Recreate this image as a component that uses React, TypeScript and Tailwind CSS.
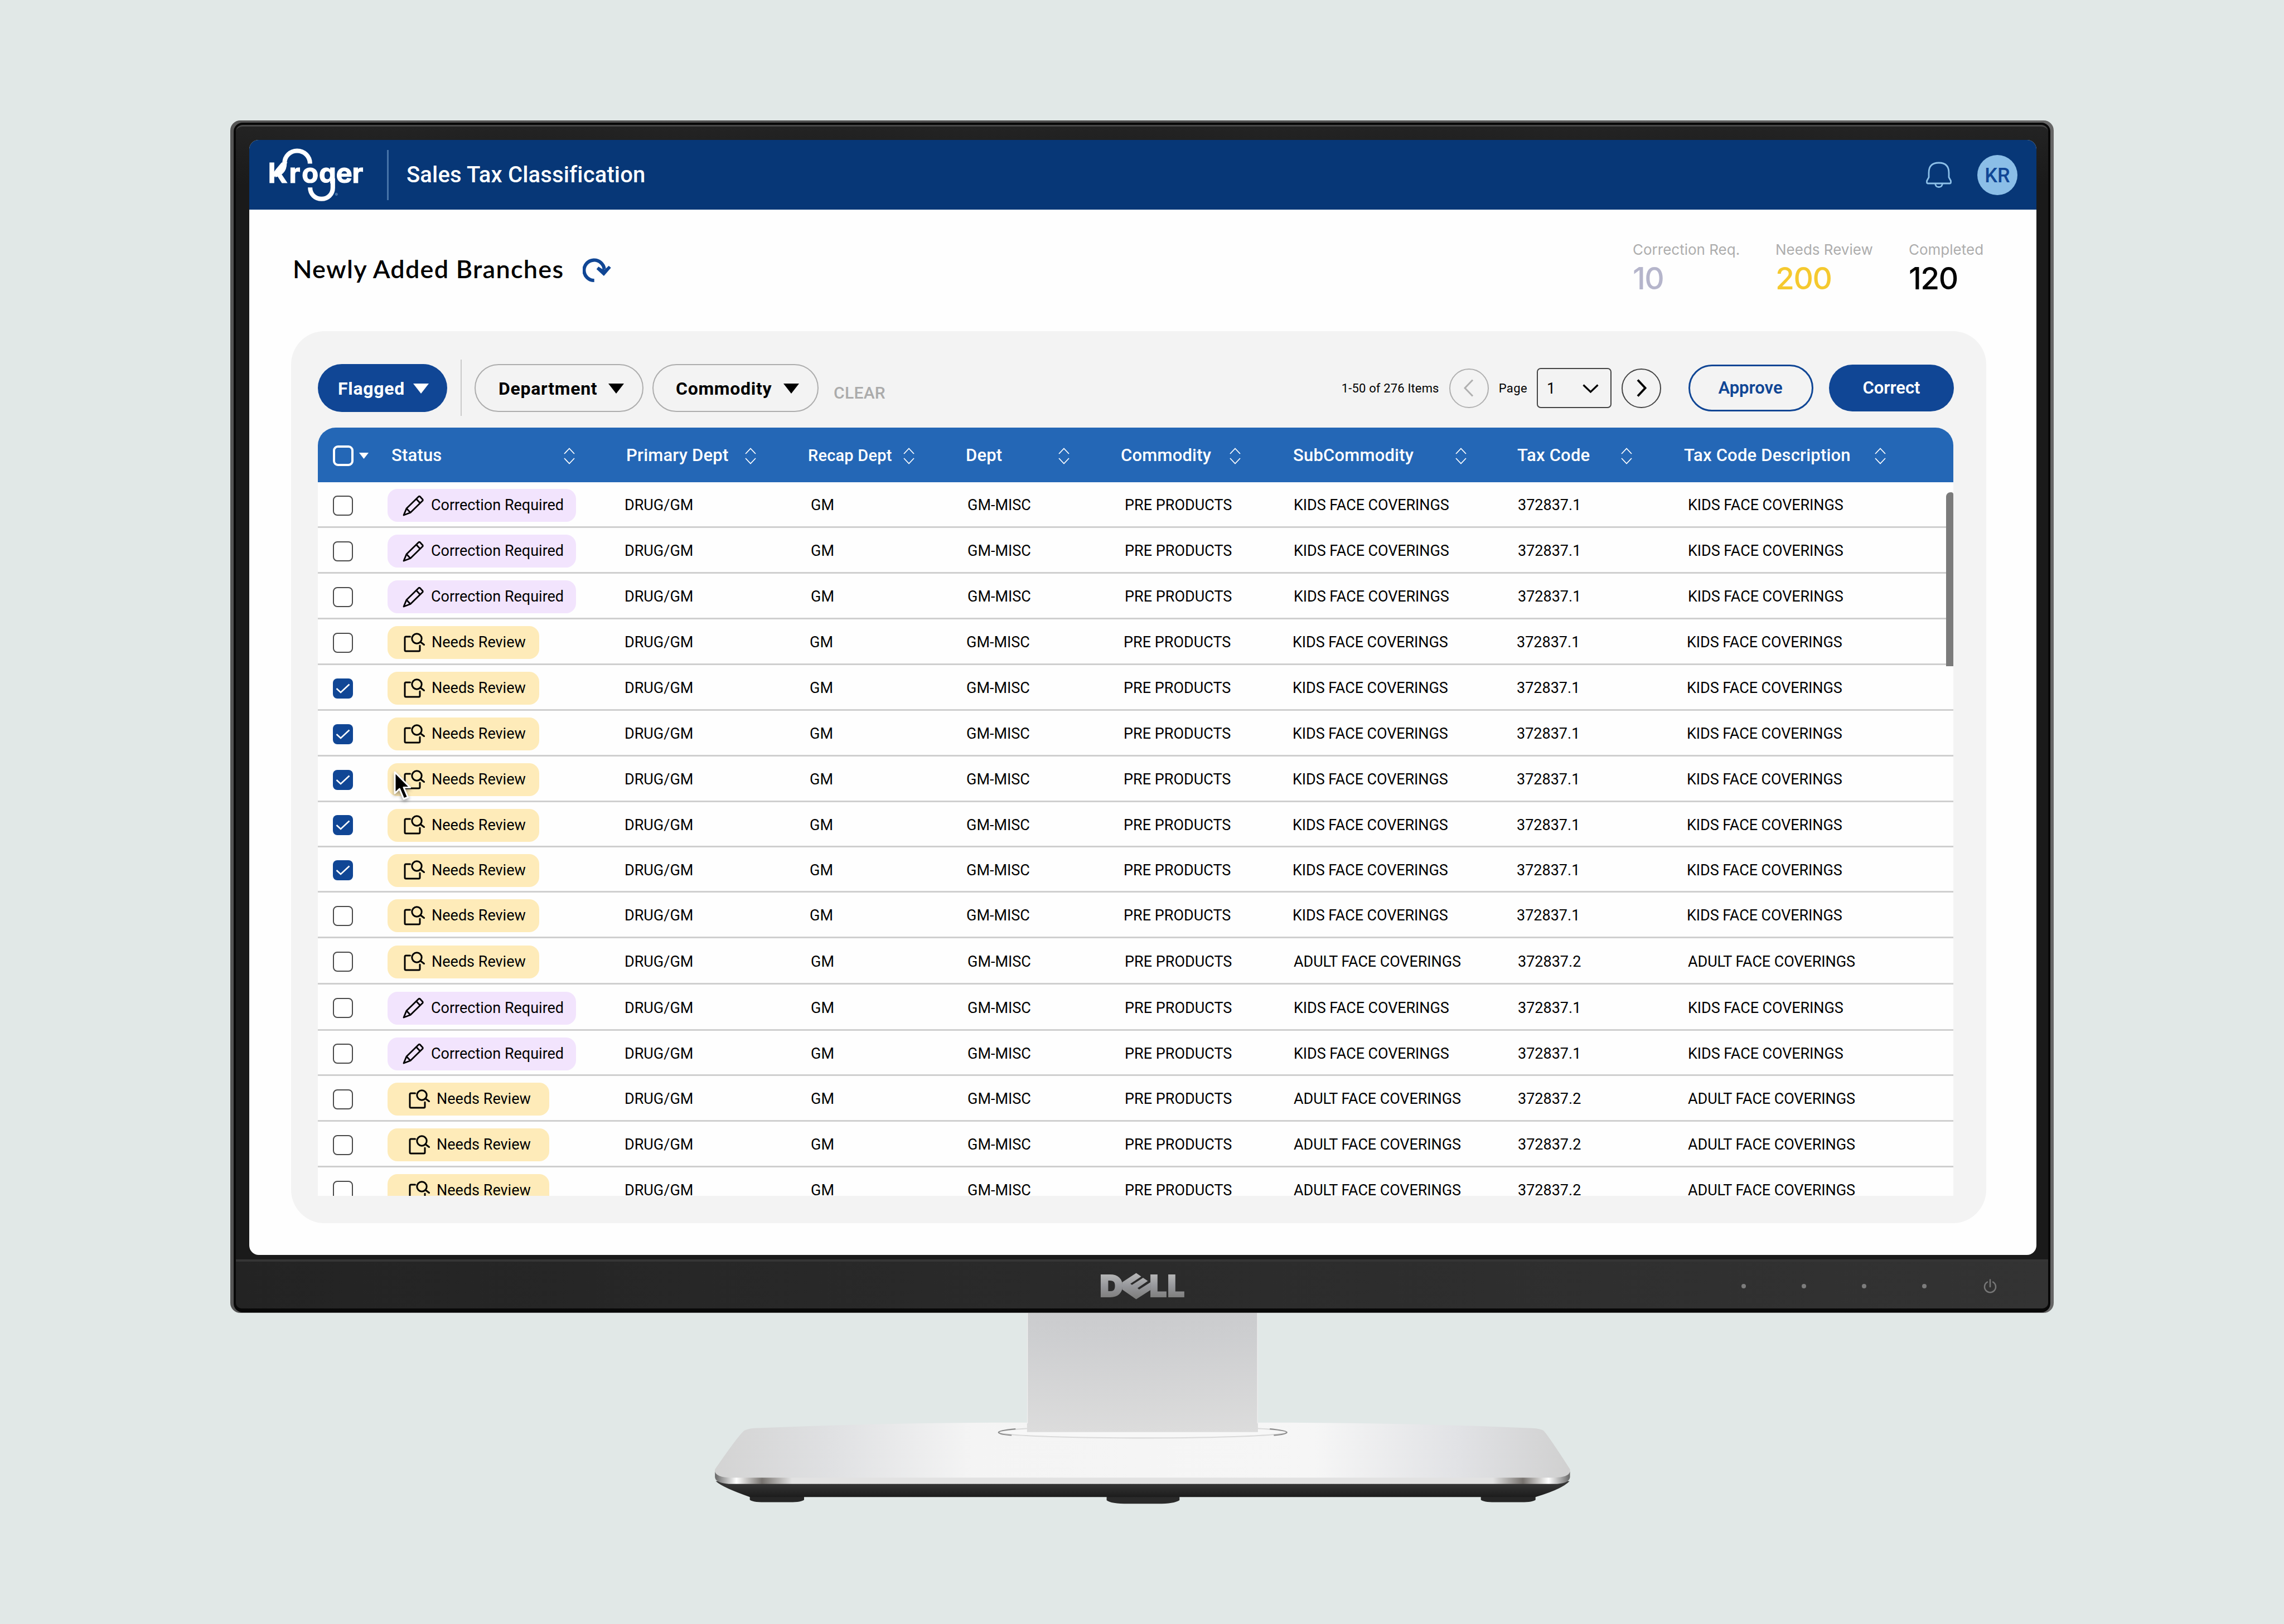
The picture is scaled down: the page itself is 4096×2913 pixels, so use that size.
import { clsx } from 'clsx';

type Status = 'correction' | 'review';

interface Row {
  status: Status;
  checked?: boolean;
  adult?: boolean;
  wide?: boolean;
  height?: string;
  nudged?: boolean;
}

const ROWS: Row[] = [
  { status: 'correction' },
  { status: 'correction' },
  { status: 'correction' },
  { status: 'review', nudged: true },
  { status: 'review', checked: true, nudged: true },
  { status: 'review', checked: true, nudged: true },
  { status: 'review', checked: true, nudged: true },
  { status: 'review', checked: true, nudged: true, height: 'h-[81px]' },
  { status: 'review', checked: true, nudged: true, height: 'h-[81px]' },
  { status: 'review', nudged: true },
  { status: 'review', adult: true, height: 'h-[83px]' },
  { status: 'correction', height: 'h-[83px]' },
  { status: 'correction', height: 'h-[81px]' },
  { status: 'review', adult: true, wide: true },
  { status: 'review', adult: true, wide: true },
  { status: 'review', adult: true, wide: true },
];

const COLUMNS = [
  { label: 'Status', className: 'pl-[8px] gap-[218px]' },
  { label: 'Primary Dept', className: 'pl-[3px] gap-[30px]' },
  { label: 'Recap Dept', className: '-ml-[5px] gap-[21px] text-[29px]' },
  { label: 'Dept', className: '-ml-[3px] gap-[101px]' },
  { label: 'Commodity', className: '-ml-[6px] gap-[33px]' },
  { label: 'SubCommodity', className: '-ml-[1px] gap-[75px]' },
  { label: 'Tax Code', className: '-ml-[1px] gap-[56px]' },
  { label: 'Tax Code Description', className: '-ml-[7px] gap-[43px]' },
];

const GRID =
  'grid grid-cols-[124px_426px_334px_281px_281px_304px_402px_305px_476px] items-center';

const KrogerLogo = () => (
  <svg className="h-[101px] w-[175px]" viewBox="45 60 740 426" fill="none">
    <defs>
      <clipPath id="baseline">
        <rect x="0" y="150" width="900" height="188" />
      </clipPath>
    </defs>
    <g
      clipPath="url(#baseline)"
      fill="#fff"
      stroke="#fff"
      strokeWidth="5"
      fontFamily="Inter"
      fontWeight="700"
      fontSize="206"
    >
      <text y="335">
        <tspan x="48">K</tspan>
        <tspan x="208">r</tspan>
        <tspan x="304">o</tspan>
        <tspan x="434">g</tspan>
        <tspan x="564">e</tspan>
        <tspan x="686">r</tspan>
      </text>
    </g>
    <path
      d="M100 276C150 262 173 232 173 186C173 132 216 91 268 91C323 91 366 134 366 188"
      stroke="#fff"
      strokeWidth="34"
    />
    <path d="M539 300V372C539 420 502 456 454 456C405 456 367 420 367 369" stroke="#fff" strokeWidth="34" />
    <text x="555" y="434" fill="#8db3dd" fontFamily="Inter" fontSize="34">
      ®
    </text>
  </svg>
);

const DellLogo = () => (
  <svg className="h-[50px] w-[153px]" viewBox="48 62 644 210">
    <defs>
      <linearGradient id="steel" x1="0" y1="70" x2="0" y2="262" gradientUnits="userSpaceOnUse">
        <stop offset="0" stopColor="#b9b9b9" />
        <stop offset="0.5" stopColor="#96979b" />
        <stop offset="1" stopColor="#7c7c7a" />
      </linearGradient>
    </defs>
    <g fill="url(#steel)" stroke="url(#steel)" strokeWidth="8" fontFamily="Inter" fontWeight="900" fontSize="226">
      <text y="246" x="49" textLength="176" lengthAdjust="spacingAndGlyphs">
        D
      </text>
      <text y="246" x="425" textLength="130" lengthAdjust="spacingAndGlyphs">
        L
      </text>
      <text y="246" x="559" textLength="130" lengthAdjust="spacingAndGlyphs">
        L
      </text>
    </g>
    {/* tilted square with the two slots of the E */}
    <path
      d="M218 138L324 68L362 94L280 149L292 158L376 104L412 128L334 182L346 192L432 138V196L324 266L218 192Z"
      fill="url(#steel)"
    />
  </svg>
);

const Caret = ({ className = 'h-[18px] w-[28px]' }: { className?: string }) => (
  <svg className={className} viewBox="0 0 28 18" fill="currentColor">
    <path d="M0 0H28L14 18Z" />
  </svg>
);

const SortIcon = () => (
  <svg className="h-[30px] w-[20px] shrink-0" viewBox="0 0 20 30" fill="none" stroke="#fff" strokeWidth="1.8">
    <path d="M1 11L10 1.5L19 11M1 19L10 28.5L19 19" />
  </svg>
);

const PencilIcon = () => (
  <svg
    className="size-[38px] shrink-0"
    viewBox="0 0 38 38"
    fill="none"
    stroke="#000"
    strokeWidth="2.8"
    strokeLinejoin="round"
  >
    <path d="M2 36L7 24L29 2.5Q30 2 31 2.5L36 8Q36.500 9 36 10L14 31.500Z" />
    <path d="M7 24L14 31.500M24.500 7L31.500 14.500" />
  </svg>
);

const ReviewIcon = () => (
  <svg
    className="h-[36px] w-[40px] shrink-0"
    viewBox="0 0 40 36"
    fill="none"
    stroke="#000"
    strokeWidth="3"
    strokeLinecap="round"
    strokeLinejoin="round"
  >
    <path d="M12.500 7H5Q3 7 3 9V31Q3 33 5 33H28Q30 33 30 31V23" />
    <circle cx="24.500" cy="10.500" r="8.700" />
    <path d="M31 16.500L37.500 21.500" />
  </svg>
);

const StatusBadge = ({ status, wide }: { status: Status; wide?: boolean }) => {
  if (status === 'correction') {
    return (
      <div className="ml-[1px] flex h-[59px] w-[338px] items-center gap-[13px] rounded-[18px] bg-[#f2e4fd] pl-[27px]">
        <PencilIcon />
        <span>Correction Required</span>
      </div>
    );
  }

  return (
    <div
      className={clsx(
        'ml-[1px] flex h-[59px] items-center gap-[11px] rounded-[18px] bg-[#feebb9]',
        wide ? 'w-[290px] pl-[37px]' : 'w-[272px] pl-[28px]',
      )}
    >
      <ReviewIcon />
      <span>Needs Review</span>
    </div>
  );
};

const Checkbox = ({ checked }: { checked?: boolean }) => (
  <div
    className={clsx(
      'ml-[27px] flex size-[36px] items-center justify-center rounded-[8px]',
      checked ? 'bg-[#104695]' : 'border-[2.500px] border-[#4a4a4a] bg-white',
    )}
  >
    {checked && (
      <svg className="h-[18px] w-[26px]" viewBox="0 0 26 18" fill="none" stroke="#fff" strokeWidth="2.6">
        <path d="M1.500 9L9 16L24.500 1.500" />
      </svg>
    )}
  </div>
);

const TableRow = ({ row }: { row: Row }) => {
  const description = row.adult ? 'ADULT FACE COVERINGS' : 'KIDS FACE COVERINGS';
  const shift = row.nudged && 'relative -left-[2px]';

  return (
    <div className={clsx(GRID, 'shrink-0 border-b-[3px] border-[#cfcfcf] pt-[4px]', row.height ?? 'h-[82px]')}>
      <Checkbox checked={row.checked} />
      <StatusBadge status={row.status} wide={row.wide} />
      <span>DRUG/GM</span>
      <span className={clsx(shift)}>GM</span>
      <span className={clsx(shift)}>GM-MISC</span>
      <span className={clsx('pl-[1px]', shift)}>PRE PRODUCTS</span>
      <span className={clsx('tracking-[-0.100px]', shift)}>{description}</span>
      <span className={clsx(shift)}>{row.adult ? '372837.2' : '372837.1'}</span>
      <span className={clsx('tracking-[-0.100px]', shift)}>{description}</span>
    </div>
  );
};

const Header = () => (
  <header className="flex h-[125px] shrink-0 items-center bg-[#073777] pr-[34px] pl-[33px] text-white">
    <KrogerLogo />
    <div className="ml-[39px] h-[90px] w-[3px] bg-[#4673a8]" />
    <h1 className="ml-[32px] text-[40px] font-medium tracking-[0.150px]">Sales Tax Classification</h1>
    <svg
      className="ml-auto h-[47px] w-[46px]"
      viewBox="0 0 46 47"
      fill="none"
      stroke="#8dc0e8"
      strokeWidth="2.8"
      strokeLinejoin="round"
    >
      <path d="M5 20Q5 2 23 2Q41 2 41 20V28L44.500 34.500V37Q44.500 39 42.500 39H3.500Q1.500 39 1.500 37V34.500L5 28Z" />
      <path d="M16.500 39Q17 45.500 23 45.500Q29 45.500 29.500 39" />
    </svg>
    <div className="ml-[46px] flex size-[72px] items-center justify-center rounded-full bg-[#8bbee7] pt-[2px] text-[36px] font-medium text-[#104695]">
      KR
    </div>
  </header>
);

const Stat = ({ label, value, className }: { label: string; value: string; className: string }) => (
  <div className={clsx("flex flex-col font-['Inter']", className)}>
    <span className="text-[26px] leading-[32px] text-[#adadad]">{label}</span>
    <span className="text-[55px] leading-[70px] font-medium tracking-[-1.500px]">{value}</span>
  </div>
);

const TitleBar = () => (
  <div className="flex h-[218px] shrink-0 items-start pl-[78px]">
    <h2 className="mt-[77px] text-[45px] leading-[58px] font-semibold tracking-[1.250px] font-['Lato'] text-black">
      Newly Added Branches
    </h2>
    <svg className="mt-[87px] ml-[34px] h-[44px] w-[52px]" viewBox="0 0 219 186" fill="none">
      <path d="M87 169A77 77 0 1 1 163 84" stroke="#104695" strokeWidth="26" />
      <path d="M104 84L119 64L149 84L168 86L197 58L214 73L160 135Z" fill="#104695" />
    </svg>
    <div className="mt-[56px] ml-auto flex pr-[89px]">
      <Stat label="Correction Req." value="10" className="w-[256px] text-[#b5b5cb]" />
      <Stat label="Needs Review" value="200" className="w-[239px] text-[#f5c92f]" />
      <Stat label="Completed" value="120" className="w-[140px] text-black" />
    </div>
  </div>
);

const Toolbar = () => (
  <div className="flex h-[103px] shrink-0 items-center text-[31px] font-semibold">
    <button className="flex h-[86px] w-[232px] items-center justify-between rounded-full bg-[#104695] pt-[2px] pr-[33px] pl-[36px] text-[32px] font-bold tracking-[0.700px] text-white">
      Flagged
      <Caret />
    </button>
    <div className="ml-[24px] h-[101px] w-[2px] bg-[#cacaca]" />
    <button className="ml-[23px] flex h-[86px] w-[303px] items-center justify-between rounded-full border-[2.500px] border-[#adadad] pt-[2px] pr-[33px] pl-[41px] text-[32px] font-bold tracking-[0.700px]">
      Department
      <Caret />
    </button>
    <button className="ml-[16px] flex h-[86px] w-[298px] items-center justify-between rounded-full border-[2.500px] border-[#adadad] pt-[2px] pr-[33px] pl-[40px] text-[32px] font-bold tracking-[0.700px]">
      Commodity
      <Caret />
    </button>
    <span className="mt-[17px] ml-[27px] text-[30px] font-medium tracking-[0.300px] text-[#ababab]">CLEAR</span>

    <span className="mt-[1px] ml-auto text-[22px] font-normal tracking-[0.150px]">1-50 of 276 Items</span>
    <button className="mt-[1px] ml-[18px] flex size-[71px] items-center justify-center rounded-full border-[2px] border-[#b0b0b0]">
      <svg className="h-[32px] w-[18px]" viewBox="0 0 18 32" fill="none" stroke="#b0b0b0" strokeWidth="3">
        <path d="M16 1.500L2 16L16 30.500" />
      </svg>
    </button>
    <span className="mt-[1px] ml-[18px] text-[22px] font-normal tracking-[0.400px]">Page</span>
    <div className="mt-[1px] ml-[17px] flex h-[72px] w-[134px] items-center justify-between rounded-[7px] border-[2.500px] border-[#444] pt-[2px] pr-[21px] pl-[16px] text-[27px] font-normal">
      1
      <svg className="h-[16px] w-[29px]" viewBox="0 0 29 16" fill="none" stroke="#000" strokeWidth="3.2">
        <path d="M1.500 1.500L14.500 14L27.500 1.500" />
      </svg>
    </div>
    <button className="mt-[1px] ml-[18px] flex size-[71px] items-center justify-center rounded-full border-[2.500px] border-[#444]">
      <svg className="h-[32px] w-[18px]" viewBox="0 0 18 32" fill="none" stroke="#000" strokeWidth="4">
        <path d="M2 1.500L15.500 16L2 30.500" />
      </svg>
    </button>
    <button className="ml-[49px] h-[84px] w-[224px] rounded-full border-[3px] border-[#104695] pt-[2px] pr-[2px] text-[#104695]">
      Approve
    </button>
    <button className="ml-[28px] h-[84px] w-[224px] rounded-full bg-[#104695] pt-[2px] text-white">Correct</button>
  </div>
);

const Table = () => (
  <div className="relative mt-[20px] flex h-[1378px] w-[2933px] flex-col overflow-hidden rounded-t-[32px] bg-[#fefefe]">
    <div
      className={clsx(
        GRID,
        'h-[98px] shrink-0 bg-[#2467b6] pt-[3px] text-[31px] font-medium tracking-[0.200px] text-white',
      )}
    >
      <div className="flex items-center gap-[9px] pl-[27px]">
        <div className="size-[37px] rounded-[9px] border-[4px] border-white" />
        <Caret className="h-[11px] w-[19px]" />
      </div>
      {COLUMNS.map(({ label, className }) => (
        <div key={label} className={clsx('flex items-center whitespace-nowrap', className)}>
          {label}
          <SortIcon />
        </div>
      ))}
    </div>
    <div className="flex flex-col text-[27px] text-black">
      {ROWS.map((row, i) => (
        <TableRow key={i} row={row} />
      ))}
    </div>
    <div className="absolute top-[116px] right-0 h-[312px] w-[13px] rounded-tl-[8px] rounded-tr-[4px] bg-[#7b7b7b]" />
  </div>
);

const Cursor = () => (
  <svg
    className="absolute top-[1129px] left-[257px] h-[60px] w-[40px] drop-shadow-[0_3px_3px_rgba(0,0,0,0.4)]"
    viewBox="0 0 40 60"
  >
    <path
      d="M4 5V43L12.500 35L20 53L27.500 50L20 32.500H31.500Z"
      fill="#000"
      stroke="#fff"
      strokeWidth="3"
      strokeLinejoin="round"
    />
  </svg>
);

const Screen = () => (
  <div className="relative flex h-[2000px] flex-col overflow-hidden rounded-[17px] bg-[#fefefe]">
    <Header />
    <TitleBar />
    <main className="ml-[75px] flex h-[1600px] w-[3040px] flex-col rounded-[60px] bg-[#f3f3f3] pt-[50px] pr-[58px] pl-[48px]">
      <Toolbar />
      <Table />
    </main>
    <Cursor />
  </div>
);

const Chin = () => (
  <div className="mt-[8px] -mr-[21px] -ml-[24px] grid h-[88px] grid-cols-[1fr_153px_1fr] items-center rounded-b-[10px] border-t-[4px] border-[#353535] bg-linear-to-r from-[#232323] to-[#333] pt-[4px]">
    <div />
    <DellLogo />
    <div className="flex items-center justify-end gap-[100px] pr-[92px]">
      {[0, 1, 2, 3].map(i => (
        <div key={i} className="size-[8px] rounded-full bg-[#7c7c7c]" />
      ))}
      <svg
        className="ml-[2px] h-[26px] w-[24px]"
        viewBox="0 0 24 26"
        fill="none"
        stroke="#777"
        strokeWidth="2.5"
        strokeLinecap="round"
      >
        <path d="M7 5.500A10 10 0 1 0 17 5.500M12 1.500V14" />
      </svg>
    </div>
  </div>
);

const Stand = () => (
  <svg className="h-[348px] w-[1543px]" viewBox="1795 3311 2170 490">
    <defs>
      <linearGradient id="neck" x1="0" y1="0" x2="0" y2="1">
        <stop offset="0" stopColor="#cbccce" />
        <stop offset="0.2" stopColor="#cdced0" />
        <stop offset="1" stopColor="#dcdcdc" />
      </linearGradient>
      <linearGradient id="plate" x1="0" y1="0" x2="1" y2="0">
        <stop offset="0" stopColor="#d3d3d3" />
        <stop offset="0.14" stopColor="#e0e1e3" />
        <stop offset="0.3" stopColor="#f4f4f4" />
        <stop offset="0.7" stopColor="#f6f6f6" />
        <stop offset="0.87" stopColor="#e1e2e5" />
        <stop offset="1" stopColor="#d0d0d0" />
      </linearGradient>
      <linearGradient id="chrome" x1="0" y1="0" x2="1" y2="0">
        <stop offset="0" stopColor="#666" />
        <stop offset="0.025" stopColor="#fff" />
        <stop offset="0.055" stopColor="#77736f" />
        <stop offset="0.09" stopColor="#e2e2e2" />
        <stop offset="0.91" stopColor="#e2e2e2" />
        <stop offset="0.945" stopColor="#77736f" />
        <stop offset="0.975" stopColor="#fff" />
        <stop offset="1" stopColor="#666" />
      </linearGradient>
      <linearGradient id="rubber" x1="0" y1="0" x2="0" y2="1">
        <stop offset="0" stopColor="#3a3a3a" />
        <stop offset="1" stopColor="#1c1c1c" />
      </linearGradient>
    </defs>
    <path d="M1889 3774H2026V3783Q2020 3789 1990 3789H1925Q1895 3789 1889 3783Z" fill="#262626" />
    <path d="M3735 3774H3873V3783Q3867 3789 3837 3789H3770Q3741 3789 3735 3783Z" fill="#262626" />
    <path d="M2790 3774H2974V3784Q2960 3793 2920 3793H2845Q2800 3793 2790 3784Z" fill="#2a2a2a" />
    <path d="M1803 3736Q1820 3752 1889 3776H3873Q3940 3756 3959 3736Z" fill="url(#rubber)" />
    <path d="M1801 3712V3726Q1803 3743 1845 3743H3920Q3958 3743 3960 3726V3712Z" fill="url(#chrome)" />
    <path
      d="M1875 3608Q1885 3603 1900 3602Q2200 3589 2520 3588H3250Q3560 3589 3865 3602Q3885 3603 3893 3608Q3905 3620 3960 3706Q3964 3727 3915 3727H1845Q1797 3727 1801 3706Q1860 3620 1875 3608Z"
      fill="url(#plate)"
    />
    <ellipse cx="2881" cy="3612" rx="364" ry="15" fill="#f7f7f7" stroke="#d9d9d9" strokeWidth="3" />
    <path d="M2560 3604Q2517 3608 2517 3613Q2520 3618 2550 3620" fill="none" stroke="#8b8b8b" strokeWidth="3" />
    <path d="M3202 3604Q3245 3608 3245 3613Q3242 3618 3212 3620" fill="none" stroke="#8b8b8b" strokeWidth="3" />
    <path d="M2589 3311H3172V3612H2589Z" fill="url(#neck)" />
    <path d="M2590 3311V3590M3171 3311V3590" stroke="#efefef" strokeWidth="2" />
  </svg>
);

export default function App() {
  return (
    <div className="flex h-[2913px] w-[4096px] flex-col items-center bg-[#e1e8e7] pt-[216px] font-['Roboto',sans-serif]">
      <div className="h-[2139px] w-[3270px] rounded-[18px] bg-linear-to-r from-[#555] via-[#4a4a4a] to-[#666] px-[6px] pt-[4px] pb-[1px]">
        <div className="h-full rounded-[16px] bg-[#080808] px-[4px] pt-[4px] pb-[8px]">
          <div className="h-full rounded-[12px] border-t-[3px] border-[#474747] bg-linear-to-b from-[#232323] to-[#1a1a1a] to-5% pt-[24px] pr-[21px] pl-[24px]">
            <Screen />
            <Chin />
          </div>
        </div>
      </div>
      <Stand />
    </div>
  );
}
